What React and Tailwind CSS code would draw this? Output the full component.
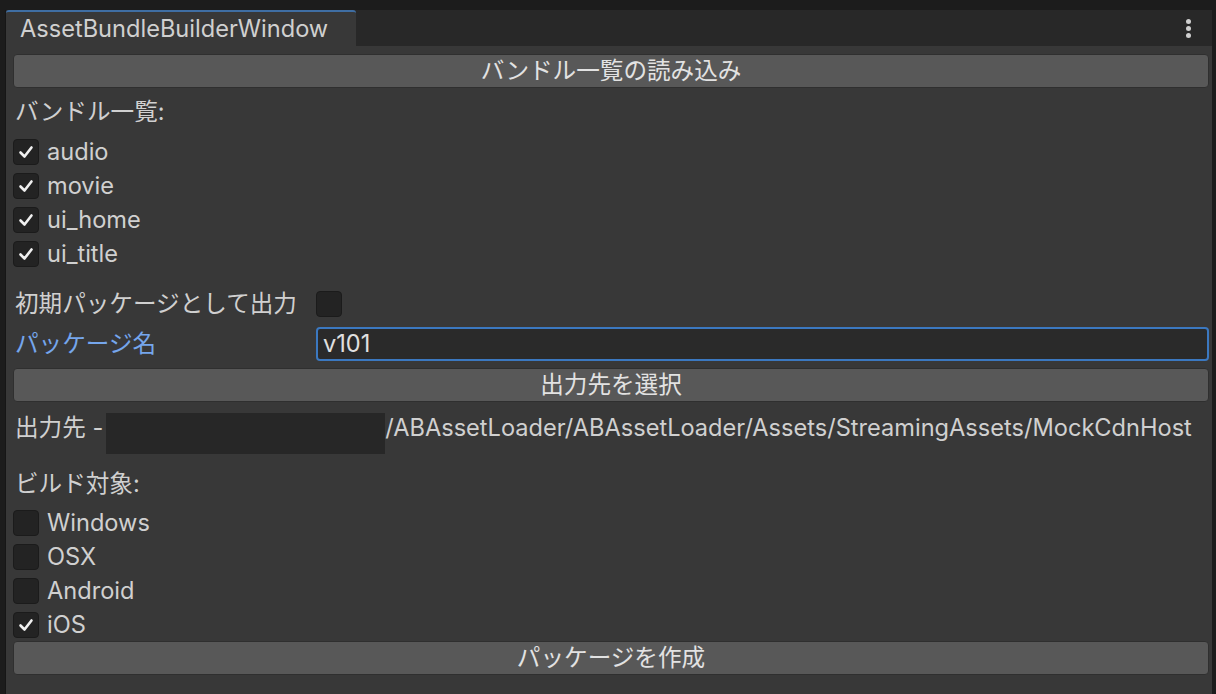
import React from 'react';

const font = { fontFamily: 'Inter, "Noto Sans CJK JP", sans-serif' };

function Check({ on }) {
  return (
    <div className="w-[26px] h-[26px] rounded-[4px] bg-[#232323] border border-[#1b1b1b] flex items-center justify-center shrink-0">
      {on && (
        <svg width="18" height="18" viewBox="0 0 18 18">
          <path d="M3.5 9.5 L7.5 13.5 L14.5 4.5" fill="none" stroke="#f0f0f0" strokeWidth="2.6" strokeLinecap="round" strokeLinejoin="round" />
        </svg>
      )}
    </div>
  );
}

function Toggle({ label, on }) {
  return (
    <div className="h-[34px] flex items-center gap-[8px] pt-[1px]">
      <Check on={on} />
      <span>{label}</span>
    </div>
  );
}

function Button({ children, className = '' }) {
  return (
    <div className={`h-[34px] w-full rounded-[4px] bg-[#585858] border border-[#2f2f2f] flex items-center justify-center text-[#e2e2e2] ${className}`}>
      {children}
    </div>
  );
}

export default function App() {
  const bundles = ['audio', 'movie', 'ui_home', 'ui_title'];
  // ビルド対象
  const targets = [
    { name: 'Windows', on: false },
    { name: 'OSX', on: false },
    { name: 'Android', on: false },
    { name: 'iOS', on: true },
  ];

  return (
    <div className="w-[1216px] h-[694px] bg-[#1c1c1c] pt-[10px] pl-[5px] pr-[4px] overflow-hidden text-[23.6px] text-[#d0d0d0]" style={font}>
      <div className="h-full flex flex-col border-l border-[#161616] bg-[#383838]">
        {/* タブバー */}
        <div className="h-[36px] bg-[#282828] flex items-stretch shrink-0">
          <div className="w-[350px] bg-[#383838] border-t-2 border-[#3f6ea3] rounded-t-[3px] pl-[14px] flex items-center">
            AssetBundleBuilderWindow
          </div>
          <div className="flex-1" />
          <div className="w-[44px] flex flex-col items-center justify-center gap-[2px] pr-[4px]">
            <span className="w-[5px] h-[5px] rounded-full bg-[#cfcfcf]" />
            <span className="w-[5px] h-[5px] rounded-full bg-[#cfcfcf]" />
            <span className="w-[5px] h-[5px] rounded-full bg-[#cfcfcf]" />
          </div>
        </div>

        <div className="flex-1 flex flex-col pl-[7px] pr-[3px]">
          <Button className="mt-[8px]">バンドル一覧の読み込み</Button>

          <div className="h-[34px] mt-[7px] flex items-center pl-[2px]">バンドル一覧:</div>
          <div className="mt-[5px] flex flex-col">
            {bundles.map((b) => (
              <Toggle key={b} label={b} on />
            ))}
          </div>

          <div className="h-[34px] mt-[17px] flex items-center">
            <span className="w-[303px] pl-[2px]">初期パッケージとして出力</span>
            <Check on={false} />
          </div>

          <div className="h-[34px] mt-[6px] flex items-center">
            <span className="w-[303px] pl-[2px] text-[#75a6ec]">パッケージ名</span>
            <div className="flex-1 h-[34px] rounded-[4px] bg-[#2a2a2a] border-2 border-[#3b78c0] flex items-center pl-[5px] text-[#e0e0e0]">
              v101
            </div>
          </div>

          <Button className="mt-[7px]">出力先を選択</Button>

          <div className="h-[41px] mt-[11px] flex items-stretch pl-[2px]">
            <span className="flex items-center pb-[12px]">出力先 -</span>
            <div className="w-[279px] bg-[#272727] ml-[3px]" />
            <span className="flex items-center pb-[12px]">/ABAssetLoader/ABAssetLoader/Assets/StreamingAssets/MockCdnHost</span>
          </div>

          <div className="h-[34px] mt-[13px] flex items-center pl-[2px]">ビルド対象:</div>
          <div className="mt-[4px] flex flex-col">
            {targets.map((t) => (
              <Toggle key={t.name} label={t.name} on={t.on} />
            ))}
          </div>

          <Button>パッケージを作成</Button>
        </div>
      </div>
    </div>
  );
}
